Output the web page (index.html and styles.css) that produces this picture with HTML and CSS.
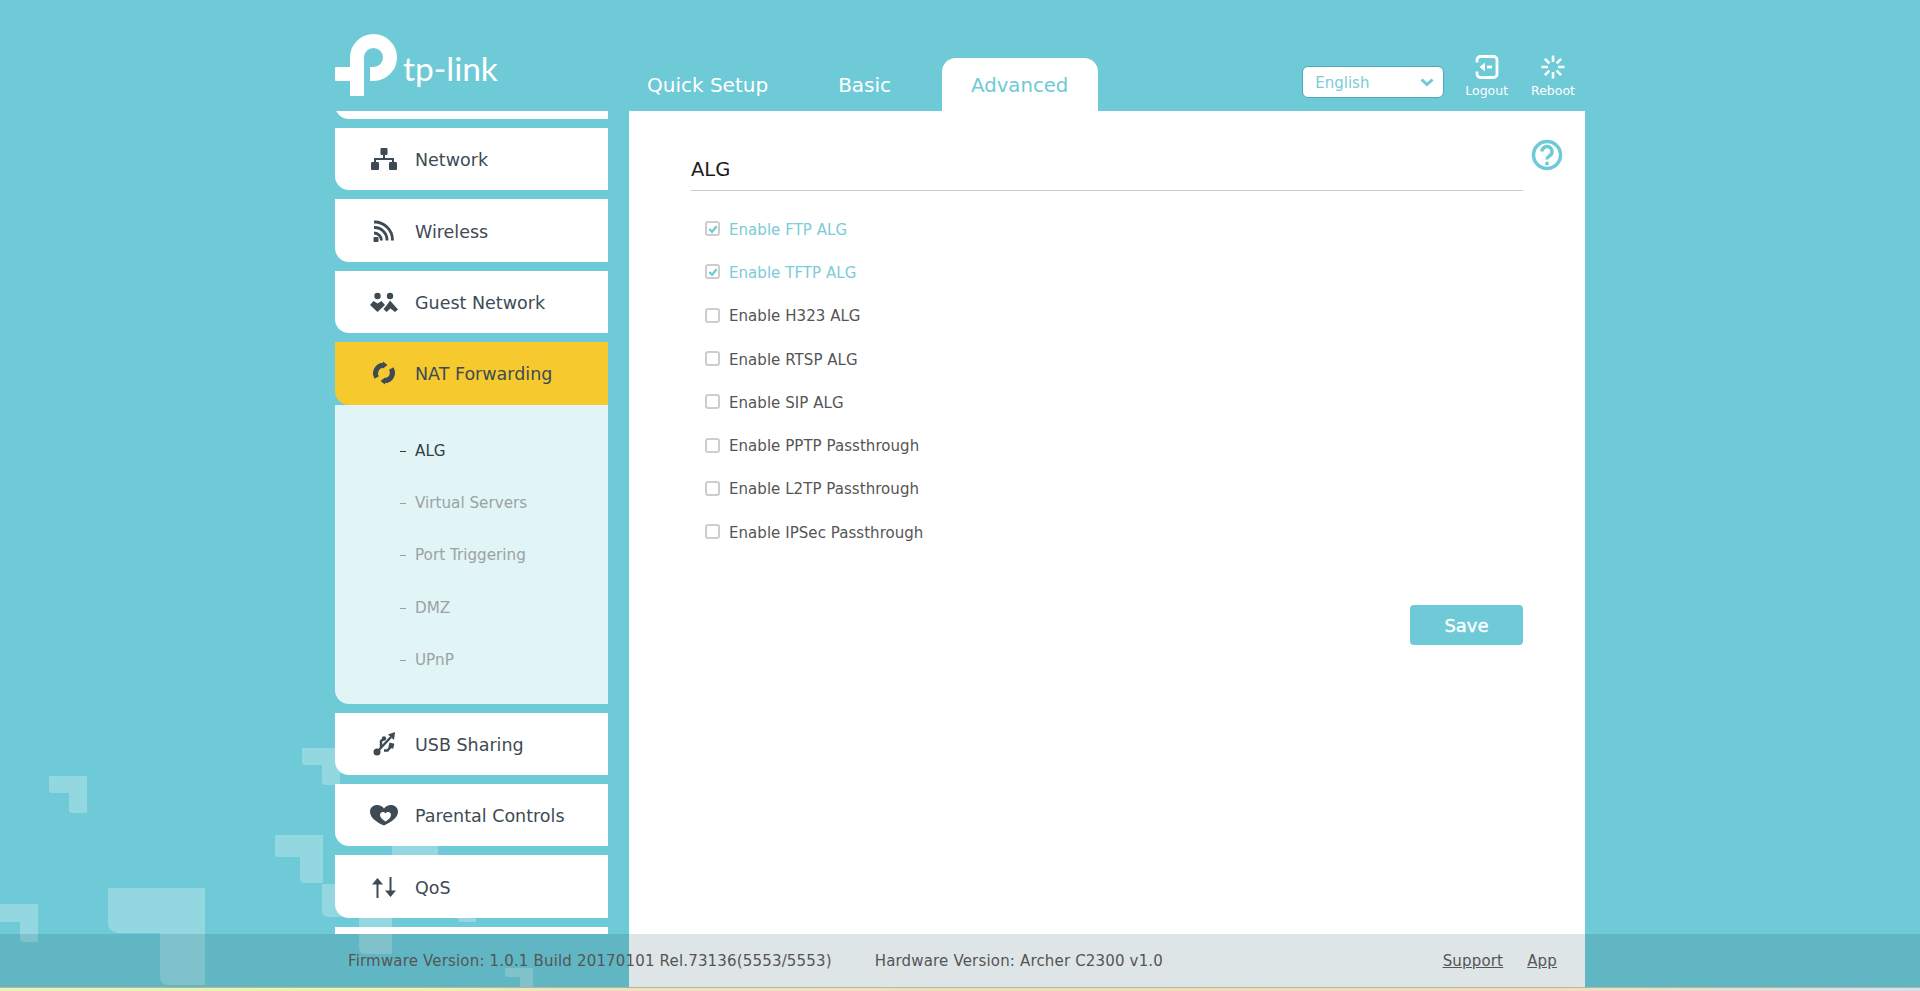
FILE: index.html
```html
<!DOCTYPE html>
<html lang="en">
<head>
<meta charset="utf-8">
<title>TP-Link Archer C2300</title>
<link rel="stylesheet" href="styles.css">
</head>
<body>
<svg class="deco" viewBox="0 0 1920 991" aria-hidden="true">
  <path d="M49 776H87V813H72a3 3 0 0 1-3-3V793H52a3 3 0 0 1-3-3Z"/>
  <path d="M108 888H205V985H168a8 8 0 0 1-8-8V933H118a10 10 0 0 1-10-10Z"/>
  <path d="M0 904H38V942H23a3 3 0 0 1-3-3V922H0Z"/>
  <path d="M302 748H340V785H325a3 3 0 0 1-3-3V765H305a3 3 0 0 1-3-3Z"/>
  <path d="M275 835H323V883H304a4 4 0 0 1-4-4V857H278a3 3 0 0 1-3-3Z"/>
  <path d="M322 884H392V954H365a6 6 0 0 1-6-6V917H328a6 6 0 0 1-6-6Z"/>
  <rect x="392" y="840" width="46" height="30"/>
  <path d="M440 900H476V922H461a3 3 0 0 1-3-3V900Z"/>
  <path d="M505 968H533V996H523a3 3 0 0 1-3-3V977H508a3 3 0 0 1-3-3Z"/>
</svg>

<div class="page">
  <header class="header">
    <div class="logo">
      <svg class="logo-mark" viewBox="15 14 62 62" aria-hidden="true">
        <rect x="15" y="47" width="29" height="14" rx="1"/>
        <path class="logo-loop" d="M37 76V37.5A16.5 16.5 0 1 1 53.5 54H50"/>
      </svg>
      <span class="logo-text">tp-link</span>
    </div>
    <nav class="tabs">
      <a class="tab">Quick Setup</a>
      <a class="tab">Basic</a>
      <a class="tab tab-active">Advanced</a>
    </nav>
    <div class="tools">
      <div class="lang">
        <span>English</span>
        <svg class="lang-chevron" viewBox="0 0 14 9" aria-hidden="true"><path d="M1.500 1.500l5.500 5 5.500-5"/></svg>
      </div>
      <a class="tool">
        <svg class="tool-icon" viewBox="0 0 24 24" aria-hidden="true">
          <path class="tool-stroke" d="M2 7.500V5a3.500 3.500 0 0 1 3.500-3.500h13A3.500 3.500 0 0 1 22 5v14a3.500 3.500 0 0 1-3.500 3.500h-13A3.500 3.500 0 0 1 2 19v-2.500"/>
          <path class="tool-fill" d="M4.500 12L10 7.500v9Z"/>
          <path class="tool-stroke" d="M12 12h5"/>
        </svg>
        <span>Logout</span>
      </a>
      <a class="tool">
        <svg class="tool-icon" viewBox="-13 -13 26 26" aria-hidden="true">
          <path class="tool-stroke" d="M0-12.500v7M0 5.500v7M-12.500 0h7M5.500 0h7M-8.800-8.800l4.900 4.900M3.900 3.900l4.900 4.900M8.800-8.800l-4.900 4.900M-3.900 3.900l-4.900 4.900"/>
        </svg>
        <span>Reboot</span>
      </a>
    </div>
  </header>

  <div class="body">
    <aside class="sidebar">
      <div class="item item-scrolled"></div>
      <a class="item">
        <svg class="item-icon" viewBox="0 0 28 24" aria-hidden="true">
          <rect x="10.500" y="1" width="7" height="7" rx="1"/>
          <rect x="1" y="15" width="8" height="8" rx="1"/>
          <rect x="19" y="15" width="8" height="8" rx="1"/>
          <path class="icon-line" d="M14 8v4M5 16v-4h18v4"/>
        </svg>
        <span>Network</span>
      </a>
      <a class="item">
        <svg class="item-icon" viewBox="0 0 28 24" aria-hidden="true">
          <path class="icon-arc" d="M4 3A18 18 0 0 1 22.500 21.500M4 8.500A12.500 12.500 0 0 1 17 21.500M4 14A7.500 7.500 0 0 1 11.500 21.500"/>
          <rect x="3.500" y="18" width="5" height="5" rx="1"/>
        </svg>
        <span>Wireless</span>
      </a>
      <a class="item">
        <svg class="item-icon" viewBox="0 0 28 24" aria-hidden="true">
          <circle cx="7.500" cy="6" r="3.200"/>
          <circle cx="20" cy="6" r="3.200"/>
          <path d="M0 15l3.500-4 4 2.500 4-2.500 3.500 4-7.500 7Z"/>
          <path d="M20 10.500l8 9-3 2.500-4.500-3.500-4 3.500-3-3 3-3.500Z"/>
        </svg>
        <span>Guest Network</span>
      </a>
      <div class="group">
        <a class="item item-active">
          <svg class="item-icon" viewBox="0 0 28 24" aria-hidden="true">
            <path class="icon-ring" d="M6.800 16.500A8 8 0 0 1 13 4.200M21.200 7.500A8 8 0 0 1 15 19.800"/>
            <path d="M13 .5l4.500 3.500-4.500 3.500ZM15 23.500L10.500 20l4.500-3.500Z"/>
          </svg>
          <span>NAT Forwarding</span>
        </a>
        <div class="submenu">
          <a class="sub sub-active">ALG</a>
          <a class="sub">Virtual Servers</a>
          <a class="sub">Port Triggering</a>
          <a class="sub">DMZ</a>
          <a class="sub">UPnP</a>
        </div>
      </div>
      <a class="item">
        <svg class="item-icon" viewBox="0 0 28 24" aria-hidden="true">
          <circle cx="7" cy="20" r="3.500"/>
          <path class="icon-usb" d="M7 20L21 5M11 15V9l3-2M14 18.500h3.500l3.500-4"/>
          <path d="M25 0l-1 8-6-5.500Z"/>
          <rect x="19" y="11" width="5" height="5" transform="rotate(15 21 13)"/>
          <circle cx="14" cy="6.500" r="2.200"/>
        </svg>
        <span>USB Sharing</span>
      </a>
      <a class="item">
        <svg class="item-icon" viewBox="0 0 28 24" aria-hidden="true">
          <path d="M14 22.500C6 19 0 14.500 0 8.500 0 4.500 3.500 2 7 2c3 0 5.500 1.500 7 3.500C15.500 3.500 18 2 21 2c3.500 0 7 2.500 7 6.500 0 6-6 10-14 14Z"/>
          <path class="icon-cut" d="M15.500 18.500C12.500 16.500 10 14.500 10 12c0-1.700 1.300-3 3-3 1 0 2 .5 2.500 1.500C16 9.500 17 9 18 9c1.700 0 3 1.300 3 3 0 2.500-2.500 4.500-5.500 6.500Z"/>
        </svg>
        <span>Parental Controls</span>
      </a>
      <a class="item">
        <svg class="item-icon" viewBox="0 0 28 24" aria-hidden="true">
          <path d="M7.500 3l5.500 6.500H2ZM20.500 22L15 15.500h11Z"/>
          <path class="icon-thin" d="M7.500 8v15M20.500 2v15"/>
        </svg>
        <span>QoS</span>
      </a>
      <div class="item"></div>
    </aside>

    <main class="panel">
      <svg class="help" viewBox="-16 -16 32 32" aria-hidden="true">
        <circle r="13.500"/>
        <path d="M-5-3.500a5 5 0 1 1 8 4C1 2-.2 2.500 0 4.500"/>
        <circle class="help-dot" cy="8.500" r="2"/>
      </svg>
      <h1 class="title">ALG</h1>
      <ul class="options">
        <li class="option option-on"><span class="check"><svg viewBox="0 0 11 11" aria-hidden="true"><path d="M1.500 5.500l3 3 5-6"/></svg></span><span class="option-label">Enable FTP ALG</span></li>
        <li class="option option-on"><span class="check"><svg viewBox="0 0 11 11" aria-hidden="true"><path d="M1.500 5.500l3 3 5-6"/></svg></span><span class="option-label">Enable TFTP ALG</span></li>
        <li class="option"><span class="check"></span><span class="option-label">Enable H323 ALG</span></li>
        <li class="option"><span class="check"></span><span class="option-label">Enable RTSP ALG</span></li>
        <li class="option"><span class="check"></span><span class="option-label">Enable SIP ALG</span></li>
        <li class="option"><span class="check"></span><span class="option-label">Enable PPTP Passthrough</span></li>
        <li class="option"><span class="check"></span><span class="option-label">Enable L2TP Passthrough</span></li>
        <li class="option"><span class="check"></span><span class="option-label">Enable IPSec Passthrough</span></li>
      </ul>
      <div class="actions"><button class="save" type="button">Save</button></div>
    </main>
  </div>
</div>

<footer class="footer">
  <div class="footer-inner">
    <span class="firmware">Firmware Version: 1.0.1 Build 20170101 Rel.73136(5553/5553)</span>
    <span>Hardware Version: Archer C2300 v1.0</span>
    <a class="footer-link footer-support">Support</a>
    <a class="footer-link">App</a>
  </div>
</footer>
<div class="strip"></div>
</body>
</html>
```

FILE: styles.css
```css
* { box-sizing: border-box; }

html, body { height: 100%; }

body {
  margin: 0;
  position: relative;
  overflow: hidden;
  background: #6ecad6;
  color: #3e4a54;
  font-family: "DejaVu Sans", Verdana, sans-serif;
}

a { color: inherit; text-decoration: none; }

.deco {
  position: absolute;
  left: 0;
  top: 0;
  width: 1920px;
  height: 991px;
  fill: #fff;
  fill-opacity: .26;
}

.page {
  position: relative;
  display: flex;
  flex-direction: column;
  width: 1250px;
  height: 987px;
  margin-left: 335px;
}

/* Header */
.header {
  display: flex;
  flex: 0 0 111px;
}

.logo {
  flex: 0 0 277px;
  display: flex;
  align-items: flex-start;
  padding-top: 34px;
}

.logo-mark {
  width: 62px;
  height: 62px;
  fill: #fff;
}

.logo-loop {
  fill: none;
  stroke: #fff;
  stroke-width: 14;
}

.logo-text {
  margin: 12px 0 0 6px;
  color: #fff;
  font-family: Lato, sans-serif;
  font-size: 33.500px;
  font-weight: 400;
  line-height: 44px;
}

.tabs {
  display: flex;
  align-items: flex-end;
}

.tab {
  display: flex;
  align-items: center;
  height: 53px;
  padding: 1px 35px 0;
  color: #fff;
  font-size: 20px;
}

.tab-active {
  width: 156px;
  margin-left: 16px;
  padding: 1px 29px 0;
  background: #fff;
  border-radius: 14px 14px 0 0;
  color: #6ecad6;
  font-size: 19.700px;
}

.tools {
  display: flex;
  align-items: flex-start;
  margin-left: auto;
  padding: 55px 10px 0 0;
}

.lang {
  display: flex;
  align-items: center;
  justify-content: space-between;
  width: 142px;
  height: 32px;
  margin: 11px 21px 0 0;
  padding: 1px 9px 0 12px;
  background: #fff;
  border: 1px solid #4fa8b3;
  border-radius: 6px;
  color: #7ccbd8;
  font-size: 15px;
}

.lang-chevron {
  width: 14px;
  height: 9px;
  fill: none;
  stroke: #6ecad6;
  stroke-width: 3;
}

.tool {
  display: flex;
  flex-direction: column;
  align-items: center;
  gap: 4px;
  color: #fff;
  font-size: 12.500px;
  line-height: 16px;
}

.tool + .tool { margin-left: 23px; }

.tool-icon {
  width: 24px;
  height: 24px;
}

.tool-stroke {
  fill: none;
  stroke: #fff;
  stroke-width: 2.800;
}

.tool-fill { fill: #fff; }

/* Body */
.body {
  flex: 1;
  display: flex;
  gap: 21px;
  min-height: 0;
}

.sidebar {
  flex: 0 0 273px;
  display: flex;
  flex-direction: column;
  gap: 9px;
  height: 823px;
  overflow: hidden;
}

.group {
  flex: none;
  display: flex;
  flex-direction: column;
}

.item {
  flex: 0 0 62.400px;
  display: flex;
  align-items: center;
  gap: 17px;
  padding-left: 35px;
  background: #fff;
  border-bottom-left-radius: 14px;
  font-size: 17.500px;
}

.item span { margin-top: 2px; }

.item-scrolled { margin-top: -54.400px; }

.item-active { background: #f6ca2e; }

.item-icon {
  flex: none;
  width: 28px;
  height: 24px;
  fill: #3e4a54;
}

.icon-line, .icon-thin, .icon-arc, .icon-ring, .icon-usb {
  fill: none;
  stroke: #3e4a54;
}

.icon-line { stroke-width: 2; }
.icon-thin { stroke-width: 2; }
.icon-usb { stroke-width: 2.400; }
.icon-arc { stroke-width: 2.800; }
.icon-ring { stroke-width: 5; }
.icon-cut { fill: #fff; }

.submenu {
  flex: 0 0 299px;
  display: flex;
  flex-direction: column;
  padding: 20px 0 0 80px;
  background: #e1f4f6;
  border-bottom-left-radius: 14px;
}

.sub {
  display: flex;
  align-items: center;
  height: 52.300px;
  color: #9aa3a4;
  font-size: 15.200px;
}

.sub::before {
  content: "";
  width: 6px;
  height: 1px;
  margin: 1px 9px 0 -15px;
  background: currentColor;
}

.sub-active { color: #333c44; }

/* Panel */
.panel {
  position: relative;
  flex: 1;
  padding: 0 62px;
  background: #fff;
}

.help {
  position: absolute;
  top: 28px;
  right: 22px;
  width: 32px;
  height: 32px;
  fill: none;
  stroke: #6ecad6;
  stroke-width: 3.500;
}

.help-dot {
  fill: #6ecad6;
  stroke: none;
}

.title {
  height: 80px;
  margin: 0;
  padding-top: 47px;
  border-bottom: 1px solid #cbcbcb;
  color: #1c1c1c;
  font-size: 19.500px;
  font-weight: 400;
  line-height: 24px;
}

.options {
  margin: 16px 0 0;
  padding: 0 0 0 14px;
  list-style: none;
}

.option {
  display: flex;
  align-items: center;
  gap: 9px;
  height: 43.300px;
  color: #555;
  font-size: 15px;
  letter-spacing: .05px;
}

.option-label { margin-top: 2px; }

.option-on { color: #7ccbd8; }

.check {
  flex: none;
  display: flex;
  align-items: center;
  justify-content: center;
  width: 15px;
  height: 15px;
  border: 2px solid #cdcdcd;
  border-radius: 3px;
}

.check svg {
  width: 10px;
  height: 10px;
  fill: none;
  stroke: #6ecad6;
  stroke-width: 2.500;
}

.actions {
  display: flex;
  justify-content: flex-end;
  margin-top: 52px;
}

.save {
  width: 113px;
  height: 40px;
  padding: 0;
  border: 0;
  border-radius: 4px;
  background: #6ecad6;
  color: #fff;
  font-family: inherit;
  font-size: 18px;
  -webkit-text-stroke: .35px #fff;
}

/* Footer */
.footer {
  position: absolute;
  left: 0;
  right: 0;
  bottom: 4px;
  height: 53px;
  background: rgba(10, 62, 77, .135);
  color: #555;
  font-size: 15px;
  letter-spacing: .17px;
}

.footer-inner {
  display: flex;
  align-items: center;
  width: 1250px;
  height: 100%;
  margin-left: 335px;
  padding: 1px 28px 0 13px;
}

.firmware { margin-right: 43px; }

.footer-link { text-decoration: underline; }

.footer-support { margin-left: auto; margin-right: 24px; }

.strip {
  position: absolute;
  left: 0;
  right: 0;
  bottom: 0;
  height: 4px;
  border-top: 1px solid #b6b59c;
  background: linear-gradient(90deg, #e6f3b4 0%, #eef3a8 22%, #f1e0bd 30%, #efdfb8 60%, #f4dcc0 84%, #d5e0ee 100%);
}
```
